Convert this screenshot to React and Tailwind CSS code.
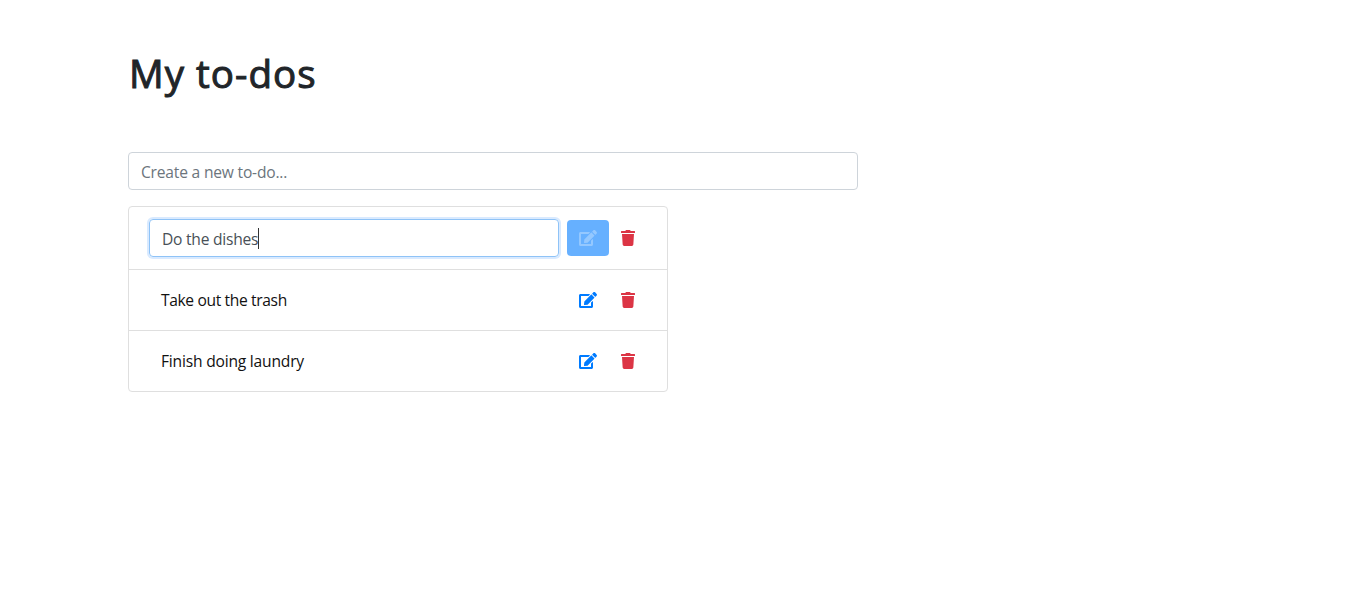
import { FaEdit, FaTrash } from "react-icons/fa";

const todos = [
  { text: "Take out the trash", tracking: "tracking-[-0.36px]" },
  { text: "Finish doing laundry", tracking: "tracking-[-0.2px]" },
];

function DeleteButton() {
  return (
    <button aria-label="Delete" className="flex h-9 w-[38px] items-center justify-center text-[#dc3545]">
      <FaTrash size={16} />
    </button>
  );
}

function TodoRow({ text, tracking }) {
  return (
    <li className="flex h-[61px] items-center border-t border-[#dfdfdf] pr-5 pl-8">
      <span className={`w-[406px] pt-[2px] text-[15.6px] text-[#111] ${tracking}`}>{text}</span>
      <button aria-label="Edit" className="flex h-9 w-[42px] items-center justify-center text-[#007bff]">
        <FaEdit size={18} />
      </button>
      <DeleteButton />
    </li>
  );
}

export default function App() {
  return (
    <main className="min-h-screen bg-white pt-12 pl-32 font-['Open_Sans','Noto_Sans',sans-serif] text-[#212529]">
      <h1 className="h-[104px] pl-px text-[38.5px] leading-[50px] font-normal tracking-[1.05px] [-webkit-text-stroke:1px_#212529]">My to-dos</h1>
      <div className="flex h-[38px] w-[730px] items-center rounded border border-[#ced4da] px-3 pt-[3px] text-[15.6px] tracking-[-0.2px] text-[#6c757d]">
        Create a new to-do...
      </div>
      <ul className="mt-4 w-[540px] rounded border border-[#dfdfdf]">
        <li className="flex h-[62px] items-center pl-5">
          <div className="flex h-[38px] w-[410px] items-center rounded border border-[#8fc3f7] px-3 text-[15.6px] tracking-[-0.24px] text-[#495057] ring-2 ring-[#d9eaff]">
            <span className="pt-[3px]">Do the dishes</span>
            <span className="mt-px h-[21px] w-px bg-[#333]" />
          </div>
          <button aria-label="Edit" className="ml-2 flex h-9 w-[42px] items-center justify-center rounded bg-[#66b0ff] text-[#94c8ff]">
            <FaEdit size={18} />
          </button>
          <DeleteButton />
        </li>
        {todos.map((todo) => <TodoRow key={todo.text} {...todo} />)}
      </ul>
    </main>
  );
}
